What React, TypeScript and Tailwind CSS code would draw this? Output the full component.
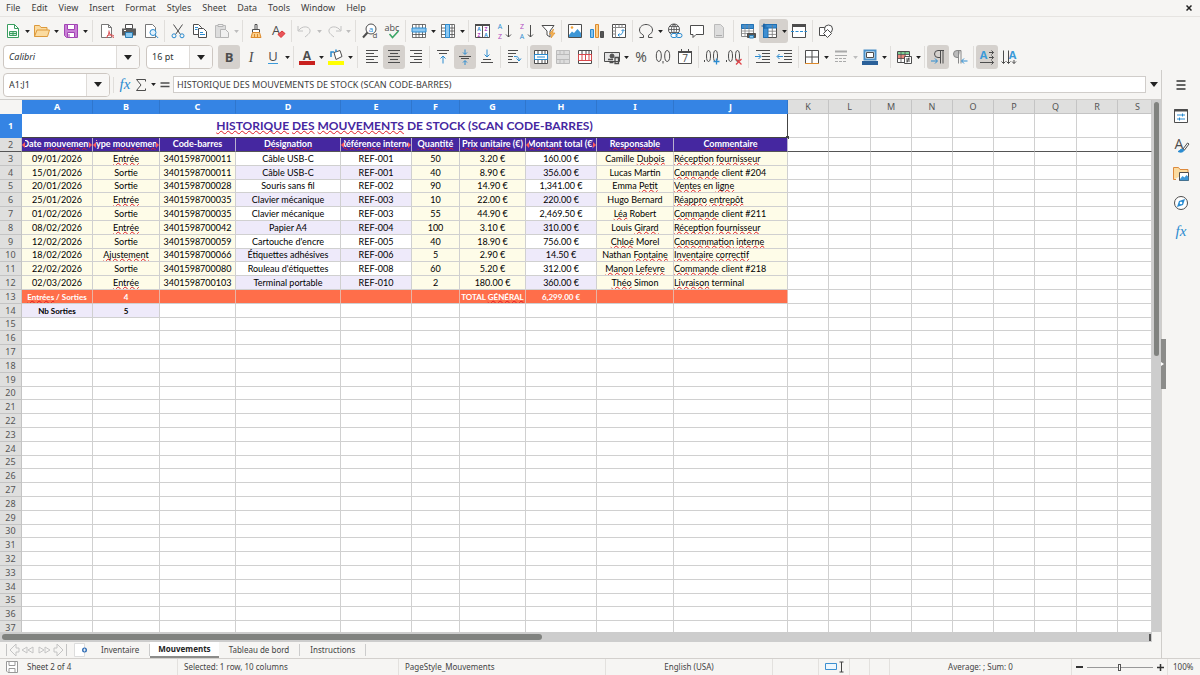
import type { ReactNode } from 'react';
import clsx from 'clsx';

const MENUS = ['File', 'Edit', 'View', 'Insert', 'Format', 'Styles', 'Sheet', 'Data', 'Tools', 'Window', 'Help'];

const COLUMNS = [
  { name: 'A', width: 'w-[71px]' },
  { name: 'B', width: 'w-[67px]' },
  { name: 'C', width: 'w-[76px]' },
  { name: 'D', width: 'w-[105px]' },
  { name: 'E', width: 'w-[71px]' },
  { name: 'F', width: 'w-[48px]' },
  { name: 'G', width: 'w-[66px]' },
  { name: 'H', width: 'w-[71px]' },
  { name: 'I', width: 'w-[77px]' },
  { name: 'J', width: 'w-[114px]' },
  { name: 'K', width: 'w-[41px]' },
  { name: 'L', width: 'w-[42px]' },
  { name: 'M', width: 'w-[41px]' },
  { name: 'N', width: 'w-[41px]' },
  { name: 'O', width: 'w-[41px]' },
  { name: 'P', width: 'w-[41px]' },
  { name: 'Q', width: 'w-[42px]' },
  { name: 'R', width: 'w-[41px]' },
  { name: 'S', width: '' },
];

const TITLE = 'HISTORIQUE DES MOUVEMENTS DE STOCK (SCAN CODE-BARRES)';

const HEADERS = [
  'Date mouvement',
  'Type mouvement',
  'Code-barres',
  'Désignation',
  'Référence interne',
  'Quantité',
  'Prix unitaire (€)',
  'Montant total (€)',
  'Responsable',
  'Commentaire',
];

const MOVEMENTS = [
  ['09/01/2026', 'Entrée', '3401598700011', 'Câble USB-C', 'REF-001', '50', '3.20 €', '160.00 €', 'Camille Dubois', 'Réception fournisseur'],
  ['15/01/2026', 'Sortie', '3401598700011', 'Câble USB-C', 'REF-001', '40', '8.90 €', '356.00 €', 'Lucas Martin', 'Commande client #204'],
  ['20/01/2026', 'Sortie', '3401598700028', 'Souris sans fil', 'REF-002', '90', '14.90 €', '1,341.00 €', 'Emma Petit', 'Ventes en ligne'],
  ['25/01/2026', 'Entrée', '3401598700035', 'Clavier mécanique', 'REF-003', '10', '22.00 €', '220.00 €', 'Hugo Bernard', 'Réappro entrepôt'],
  ['01/02/2026', 'Sortie', '3401598700035', 'Clavier mécanique', 'REF-003', '55', '44.90 €', '2,469.50 €', 'Léa Robert', 'Commande client #211'],
  ['08/02/2026', 'Entrée', '3401598700042', 'Papier A4', 'REF-004', '100', '3.10 €', '310.00 €', 'Louis Girard', 'Réception fournisseur'],
  ['12/02/2026', 'Sortie', '3401598700059', "Cartouche d'encre", 'REF-005', '40', '18.90 €', '756.00 €', 'Chloé Morel', 'Consommation interne'],
  ['18/02/2026', 'Ajustement', '3401598700066', 'Étiquettes adhésives', 'REF-006', '5', '2.90 €', '14.50 €', 'Nathan Fontaine', 'Inventaire correctif'],
  ['22/02/2026', 'Sortie', '3401598700080', "Rouleau d'étiquettes", 'REF-008', '60', '5.20 €', '312.00 €', 'Manon Lefevre', 'Commande client #218'],
  ['02/03/2026', 'Entrée', '3401598700103', 'Terminal portable', 'REF-010', '2', '180.00 €', '360.00 €', 'Théo Simon', 'Livraison terminal'],
];

const TOTALS = ['Entrées / Sorties', '4', '', '', '', '', 'TOTAL GÉNÉRAL', '6,299.00 €', '', ''];

const MISSPELLED = new Set([
  'HISTORIQUE', 'DES', 'MOUVEMENTS', 'mouvement', 'Désignation', 'Référence', 'interne', 'Quantité', 'Prix', 'unitaire',
  'Montant', 'Responsable', 'Commentaire', 'Entrée', 'Entrées', 'Ajustement', 'Dubois', 'Petit', 'Léa', 'Girard', 'Chloé',
  'Fontaine', 'Manon', 'Lefevre', 'Théo', 'Réception', 'fournisseur', 'Commande', 'Ventes', 'ligne', 'Réappro', 'entrepôt',
  'Consommation', 'Inventaire', 'correctif', 'Livraison', 'GÉNÉRAL',
]);

const INPUT_COLUMNS = ['A', 'B', 'C', 'F', 'G', 'I', 'J'];
const CLIPPED_HEADERS = [0, 1, 4, 7];
const LAST_ROW = 37;

const Spelled = ({ text }: { text: string }) => (
  <>
    {text.split(' ').map((word, i) => (
      <span key={i}>
        {i > 0 && ' '}
        {MISSPELLED.has(word) ? (
          <span className="underline decoration-wavy decoration-1 decoration-[#e01b24] underline-offset-0 [text-decoration-skip-ink:none]">
            {word}
          </span>
        ) : (
          word
        )}
      </span>
    ))}
  </>
);

/* ---------- icons, all on a 16px grid ---------- */

const Svg = ({ children }: { children: ReactNode }) => (
  <svg viewBox="0 0 16 16" className="size-4 shrink-0 overflow-visible" fill="none" stroke="#4d4d4d" aria-hidden="true">
    {children}
  </svg>
);

const T = ({ x, y, size, fill = '#4d4d4d', bold, serif, italic, children }: {
  x: number; y: number; size: number; fill?: string; bold?: boolean; serif?: boolean; italic?: boolean; children: ReactNode;
}) => (
  <text
    x={x}
    y={y}
    fontSize={size}
    fill={fill}
    stroke="none"
    textAnchor="middle"
    fontWeight={bold ? 700 : 400}
    fontStyle={italic ? 'italic' : 'normal'}
    fontFamily={serif ? '"Liberation Serif", serif' : '"Open Sans", sans-serif'}
  >
    {children}
  </text>
);

const ICONS: Record<string, ReactNode> = {
  newDoc: (
    <>
      <path d="M2.5 1.5h7l4 4v9h-11z" fill="#fff" stroke="#3a9e5f" />
      <path d="M9.5 1.5v4h4" stroke="#3a9e5f" />
      <path d="M4.5 8.5h7v4h-7zM4.5 10.5h7M8 8.5v4" fill="#cfeeda" stroke="#3a9e5f" />
    </>
  ),
  open: (
    <>
      <path d="M.5 13.500V2.500h5l1.500 2h6v2.500" fill="#fbdba0" stroke="#dd9a3c" />
      <path d="M.5 13.500l2.500-6.500h12.500l-2 6.500z" fill="#fbdba0" stroke="#dd9a3c" />
    </>
  ),
  save: (
    <>
      <path d="M1.500 1.500h13v13h-11l-2-2z" fill="#c97fd6" stroke="#a244b4" />
      <path d="M4.500 1.500h7v5h-7z" fill="#fff" stroke="#a244b4" />
      <path d="M4.500 9.500h7v5h-7z" fill="#fff" stroke="#a244b4" />
      <path d="M6 11v3" stroke="#a244b4" />
    </>
  ),
  pdf: (
    <>
      <path d="M2.500 1.500h7l3 3v10h-10z" fill="#fff" stroke="#777" />
      <path d="M9.500 1.500v3h3" stroke="#777" />
      <path d="M7 15c2-2 3.500-5 3-7.500M8 13c2-1.500 5-1.500 7 0M10 9c1 3 3 5 5 5.500" stroke="#d8484c" />
    </>
  ),
  print: (
    <>
      <path d="M4.500 1.500h7v4h-7z" fill="#fff" />
      <path d="M1 5.500h14v7H1z" fill="#5b5b5b" stroke="none" />
      <path d="M4.500 9.500h7v5h-7z" fill="#8ecbf2" stroke="#2d7db3" />
      <path d="M3 7.500h2" stroke="#fff" />
    </>
  ),
  preview: (
    <>
      <path d="M2.500 1.500h7l3 3v10h-10z" fill="#fff" stroke="#777" />
      <circle cx="10" cy="9.500" r="3" fill="#e4f2fc" stroke="#2a8bd0" />
      <path d="M12.200 12l3 3" stroke="#2a8bd0" />
    </>
  ),
  cut: (
    <>
      <path d="M3.500 1.500l7 10M12.500 1.500l-7 10" />
      <circle cx="4" cy="12.800" r="2" stroke="#2a8bd0" />
      <circle cx="12" cy="12.800" r="2" stroke="#2a8bd0" />
    </>
  ),
  copy: (
    <>
      <path d="M1.500 1.500h5l3 3v7h-8z" fill="#fff" />
      <path d="M6.500 5.500h5l3 3v6h-8z" fill="#fff" />
      <path d="M3 4.500h3M3 6.500h2.500M8 9.500h3M8 11.500h5" stroke="#2a8bd0" />
    </>
  ),
  paste: (
    <>
      <path d="M1.500 2.500h10v12h-10z" fill="#ddd" stroke="#bbb" />
      <path d="M4 1.500h5v2H4zM6.500 6.500h5l3 3v5h-8z" fill="#f0f0f0" stroke="#b5b5b5" />
    </>
  ),
  clone: (
    <>
      <path d="M7 1.500h2v5H7zM4.500 6.500h7v3h-7z" fill="#fff" />
      <path d="M4.500 9.500h7l1.500 5h-10z" fill="#fbcf8a" stroke="#dd8a2c" />
      <path d="M6.500 11v3M9.500 11v3" stroke="#dd8a2c" />
    </>
  ),
  clear: (
    <>
      <T x={6} y={12} size={13}>A</T>
      <path d="M8 11.500l4-3.500 3 2.500-4 4z" fill="#e8555a" stroke="#d33" />
    </>
  ),
  undo: <path d="M1 3v5h5M1.500 7.500C5 2.500 12 3 13 7c.5 3-2 4.500-5 7" stroke="#c2c2c2" />,
  redo: <path d="M15 3v5h-5M14.500 7.500C11 2.500 4 3 3 7c-.5 3 2 4.500 5 7" stroke="#c2c2c2" />,
  find: (
    <>
      <circle cx="9" cy="6" r="5" fill="#fff" />
      <path d="M5.500 9.500L1 14.500" strokeWidth="2" />
      <T x={9} y={9} size={8} fill="#2a8bd0">a</T>
      <T x={13} y={15} size={8}>d</T>
    </>
  ),
  spelling: (
    <>
      <T x={8} y={8} size={9}>abc</T>
      <path d="M5.500 11l3 3.500 6-6.500" stroke="#3aa565" strokeWidth="1.500" />
    </>
  ),
  row: (
    <>
      <path d="M1 1.500h14v13H1z" fill="#fff" stroke="none" />
      <path d="M1.500 1.500h13v13h-13zM1.500 11.500h13M5 1.500v13M8 1.500v13M11.500 1.500v13" strokeWidth=".8" />
      <path d="M1 5h14v4H1z" fill="#8cc8f2" stroke="#2a8bd0" />
    </>
  ),
  column: (
    <>
      <path d="M1 1.500h14v13H1z" fill="#fff" stroke="none" />
      <path d="M1.500 1.500h13v13h-13zM1.500 5h13M1.500 8h13M1.500 11.500h13M12 1.500v13" strokeWidth=".8" />
      <path d="M5.500 1.500h4v13h-4z" fill="#8cc8f2" stroke="#2a8bd0" />
    </>
  ),
  sort: (
    <>
      <path d="M1.500 1.500h14v13h-14z" fill="#fff" />
      <path d="M1 2h15" strokeWidth="2" />
      <path d="M8.500 2v12" />
      <T x={5} y={7.500} size={5} bold fill="#2a8bd0">A</T>
      <T x={5} y={14} size={5} bold fill="#b04ac0">Z</T>
      <T x={12} y={7.500} size={5} bold fill="#b04ac0">Z</T>
      <T x={12} y={14} size={5} bold fill="#2a8bd0">A</T>
    </>
  ),
  asc: (
    <>
      <T x={4} y={6} size={7} fill="#2a8bd0">A</T>
      <T x={4} y={15.500} size={7} fill="#b04ac0">Z</T>
      <path d="M12.500 2v12M10 11.500l2.500 2.500 2.500-2.500" />
    </>
  ),
  desc: (
    <>
      <T x={4} y={6} size={7} fill="#b04ac0">Z</T>
      <T x={4} y={15.500} size={7} fill="#2a8bd0">A</T>
      <path d="M12.500 2v12M10 11.500l2.500 2.500 2.500-2.500" />
    </>
  ),
  filter: (
    <>
      <path d="M2 2.500h12L10 8v6l-3-2V8z" fill="#fff" />
      <path d="M13.500 6l-4 5h2.500l-1 4 4-5h-2.500z" fill="#f9b95c" stroke="#e08f2a" strokeWidth=".7" />
    </>
  ),
  image: (
    <>
      <path d="M1.500 1.500h13v13h-13z" fill="#fff" />
      <path d="M2 12l3-3.500 2 1.500 3.500-4 3.500 4v4H2z" fill="#3e97d6" stroke="none" />
      <circle cx="5" cy="4.500" r="1.300" fill="#f2a33a" stroke="none" />
    </>
  ),
  chart: (
    <>
      <path d="M1.500 6.500h3v8h-3z" fill="#83c3ee" stroke="#2a8bd0" />
      <path d="M6.500 1.500h3v13h-3z" fill="#fbcf8a" stroke="#dd8a2c" />
      <path d="M11.500 8.500h3v6h-3z" fill="#555" />
    </>
  ),
  pivot: (
    <>
      <path d="M1.500 1.500h13v13h-13z" fill="#fff" />
      <path d="M1.500 4.500h13M4.500 1.500v13M8 1.500v3M11 1.500v3M1.500 8h3M1.500 11h3" stroke="#888" />
      <path d="M7 12c4 0 5-2 5-5M10.500 8L12 6.500 13.500 8M8.500 10.500L7 12l1.500 1.500" stroke="#2a8bd0" />
    </>
  ),
  omega: <path d="M1.500 14.500h4v-2.200C2.800 10.800 1.500 9 1.500 7 1.500 3.800 4.500 1.500 8 1.500s6.500 2.300 6.500 5.500c0 2-1.300 3.800-4 5.300v2.200h4" />,
  link: (
    <>
      <circle cx="7" cy="6.500" r="5.500" fill="#fff" />
      <path d="M1.500 6.500h11M7 1v11M2.500 3.500h9M2.500 9.500h9M7 1C3.500 4 3.500 9 7 12M7 1c3.500 3 3.500 8 0 11" strokeWidth=".8" />
      <rect x="4" y="10.500" width="6" height="4" rx="2" fill="#fff" stroke="#2a8bd0" />
      <rect x="9" y="10.500" width="6" height="4" rx="2" stroke="#2a8bd0" />
    </>
  ),
  comment: <path d="M1.500 2.500h13v9H7l-3 3v-3H1.500z" fill="#fff" />,
  headerFooter: (
    <>
      <path d="M3.500 1.500h6l3 3v10h-9z" fill="#ddd" stroke="#bbb" />
      <path d="M5 12.500h6" stroke="#aaa" />
    </>
  ),
  printRange: (
    <>
      <path d="M1.500 1.500h12v12h-12z" fill="#fff" stroke="#888" />
      <path d="M1.500 1.500h12v4h-12z" fill="#3f8fd2" stroke="#2272b4" />
      <path d="M1.500 8h12M1.500 10.500h12M5 1.500v12M9 1.500v12" stroke="#888" strokeWidth=".8" />
      <path d="M7.500 10.500h8v4h-8z" fill="#555" />
      <path d="M9.500 12.500h4v2.500h-4z" fill="#8ecbf2" stroke="#2d7db3" />
    </>
  ),
  freeze: (
    <>
      <path d="M1.500 1.500h13v13h-13z" fill="#fff" />
      <path d="M1.500 1.500h13v3.500h-13zM1.500 5h4.500v9.500H1.500z" fill="#3f8fd2" stroke="#1f6fb3" />
      <path d="M6 8.200h8.500M6 11.400h8.500M10.300 2v12.500" stroke="#777" strokeWidth=".8" />
      <path d="M-.5 3h5M2 .5v5" stroke="#1a5c9a" />
    </>
  ),
  split: (
    <>
      <path d="M1.500 1.500h13v13h-13z" fill="#fff" />
      <path d="M1 2.500h14" strokeWidth="3" />
      <path d="M0 8.500h16" stroke="#2a8bd0" strokeDasharray="3 1.500" />
    </>
  ),
  shapes: (
    <>
      <path d="M1.500 4.500h7v8h-7z" fill="#fff" />
      <circle cx="10.500" cy="6" r="4" fill="#fff" />
      <path d="M9.500 6.500l4 4-4 4-4-4z" fill="#fff" />
    </>
  ),
  bold: <T x={8} y={12.500} size={13} bold>B</T>,
  italic: <T x={8} y={12.500} size={14} serif italic>I</T>,
  underline: (
    <>
      <T x={8} y={11.500} size={13}>U</T>
      <path d="M3 14.500h10" stroke="#3b9ad9" />
    </>
  ),
  fontColor: (
    <>
      <T x={8} y={10.500} size={12} bold>A</T>
      <path d="M0 14h16" stroke="#c9211e" strokeWidth="4" />
    </>
  ),
  highlight: (
    <>
      <path d="M6 3.500l6-2 2 6-6 3z" fill="#fff" />
      <path d="M8 3V.500M3 8V3h3" stroke="#2a8bd0" strokeWidth="1.500" />
      <path d="M0 14h16" stroke="#ffff00" strokeWidth="4" />
    </>
  ),
  left: <path d="M2 1.500h12M2 4.500h8M2 7.500h12M2 10.500h8M2 13.500h12" />,
  center: <path d="M2 1.500h12M4 4.500h8M2 7.500h12M4 10.500h8M2 13.500h12" />,
  right: <path d="M2 1.500h12M6 4.500h8M2 7.500h12M6 10.500h8M2 13.500h12" />,
  top: (
    <>
      <path d="M2 1.500h12M4 4.500h8" />
      <path d="M8 14.500v-7M5.500 9.500L8 7l2.500 2.500" stroke="#2a8bd0" />
    </>
  ),
  middle: (
    <>
      <path d="M2 7.500h12M4 9.500h8" />
      <path d="M8 .5V5M6 3.500L8 5.500l2-2M8 16v-4M6 13.500l2-2 2 2" stroke="#2a8bd0" />
    </>
  ),
  bottom: (
    <>
      <path d="M2 13.500h12M4 10.500h8" />
      <path d="M8 .5v7M5.500 5.500L8 8l2.500-2.500" stroke="#2a8bd0" />
    </>
  ),
  wrap: (
    <>
      <path d="M2 1.500h10M2 4.500h8M2 7.500h5M2 10.500h4M2 13.500h10" />
      <path d="M8 7.500c3 0 5 0 5 4M10.500 9.500L13 12l2-2.500" stroke="#2a8bd0" />
    </>
  ),
  merge: (
    <>
      <path d="M1.500 1.500h13v13h-13zM1.500 5.500h13M1.500 10.500h13M5 1.500v4M9 1.500v4M12 1.500v4M5 10.500v4M9 10.500v4M12 10.500v4" fill="#fff" />
      <path d="M1.500 5.500h13v5h-13zM4 8h8" stroke="#2a8bd0" />
    </>
  ),
  mergeOff: <path d="M1.500 1.500h13v13h-13zM1.500 5.500h13M1.500 10.500h13M5 1.500v4M9 1.500v4M5 10.500v4M9 10.500v4" fill="#ddd" stroke="#bbb" />,
  unmerge: (
    <>
      <path d="M1.500 1.500h13v13h-13zM1.500 5.500h13M5 1.500v4M9 1.500v4M12 1.500v4" fill="#fff" />
      <path d="M1.500 5.500h13v6h-13zM5 5.500v6M8.500 5.500v6M12 5.500v6" stroke="#d8484c" />
    </>
  ),
  currency: (
    <>
      <path d="M.5 3.500h15v9H.500z" fill="#e4e4e4" />
      <circle cx="8" cy="7" r="2" fill="#555" />
      <path d="M4 10.500h5M11 8.500h3.500v6H11zM5.500 13.500h4" strokeWidth="1.300" />
    </>
  ),
  percent: <T x={8} y={13} size={14}>%</T>,
  number: <path d="M3.800 1.500c-1.500 0-2.500 2-2.500 5.500s1 5.500 2.500 5.500 2.500-2 2.500-5.500-1-5.500-2.500-5.500zM12.200 1.500c-1.500 0-2.500 2-2.500 5.500s1 5.500 2.500 5.500 2.500-2 2.500-5.500-1-5.500-2.500-5.500zM8 12v2.500" />,
  date: (
    <>
      <path d="M1.500 2.500h13v12h-13z" fill="#fff" />
      <path d="M1 3h14" strokeWidth="2" />
      <path d="M4.500 0v3M11.500 0v3" />
      <T x={8} y={13} size={10}>7</T>
    </>
  ),
  addDecimal: (
    <>
      <path d="M4.500 1.500c-1.300 0-2 2-2 5.500s.7 5.500 2 5.500 2-2 2-5.500-.7-5.500-2-5.500zM11.500 1.500c-1.300 0-2 2-2 5.500s.7 5.500 2 5.500 2-2 2-5.500-.7-5.500-2-5.500zM.5 11v2" />
      <path d="M12.500 9.500v6M9.500 12.500h6" stroke="#2a8bd0" strokeWidth="1.300" />
    </>
  ),
  delDecimal: (
    <>
      <path d="M4.500 1.500c-1.300 0-2 2-2 5.500s.7 5.500 2 5.500 2-2 2-5.500-.7-5.500-2-5.500zM11.500 1.500c-1.300 0-2 2-2 5.500s.7 5.500 2 5.500 2-2 2-5.500-.7-5.500-2-5.500zM.5 11v2" />
      <path d="M10 10l5.500 5.500M15.500 10L10 15.500" stroke="#e04348" strokeWidth="1.300" />
    </>
  ),
  indent: (
    <>
      <path d="M1 1.500h14M7 4.500h8M7 7.500h8M7 10.500h8M1 13.500h14" />
      <path d="M0 7.500h5.500M3.500 5L6 7.500 3.500 10" stroke="#2a8bd0" />
    </>
  ),
  outdent: (
    <>
      <path d="M1 1.500h14M7 4.500h8M7 7.500h8M7 10.500h8M1 13.500h14" />
      <path d="M6 7.500H.5M2.500 5L0 7.500 2.500 10" stroke="#2a8bd0" />
    </>
  ),
  borders: (
    <>
      <path d="M1.500 1.500h13v13h-13z" fill="#fff" />
      <path d="M8 1.500v13M1.500 8h13" />
      <path d="M1 14.500h14" stroke="#dd8a2c" />
    </>
  ),
  borderStyle: (
    <>
      <path d="M2 2.500h12" stroke="#aaa" strokeWidth="2" />
      <path d="M2 6.500h12" stroke="#aaa" />
      <path d="M2 9.500h12M2 12.500h12" stroke="#aaa" strokeDasharray="3 1" />
    </>
  ),
  borderColor: (
    <>
      <path d="M2.500 1.500h11v9h-11z" fill="#fff" stroke="#4a90c8" strokeWidth="2" />
      <path d="M4.500 3.500h7v5h-7z" />
      <path d="M0 14h16" stroke="#2a6099" strokeWidth="4" />
    </>
  ),
  conditional: (
    <>
      <path d="M1.500 2.500h12v11h-12z" fill="#fff" />
      <path d="M2 3h11v2.500H2z" fill="#7ccf94" stroke="none" />
      <path d="M2 6h8v4H2z" fill="#ec8a80" stroke="none" />
      <path d="M1.500 5.500h12M1.500 9.500h12M5 2.500v11M9 2.500v4" strokeWidth=".8" />
      <path d="M8.500 7.500h7v7h-7zM10 10h4M10 12h4M13 8.500l-2 5" fill="#fff" />
    </>
  ),
  ltr: (
    <>
      <path d="M14 1.500H8a3.500 3.500 0 0 0 0 7h2M10.500 1.500v13M13 1.500v13" />
      <path d="M1 12h6M5 9.500L7.500 12 5 14.500" stroke="#2a8bd0" />
    </>
  ),
  rtl: (
    <>
      <path d="M9 1.500H5a3.500 3.500 0 0 0 0 7h1" fill="#bbb" stroke="#888" />
      <path d="M6.500 1.500v13M9 1.500v13" stroke="#888" />
      <path d="M15.500 12H10M12 9.500L9.500 12l2.500 2.500" stroke="#2a8bd0" />
    </>
  ),
  textLtr: (
    <>
      <T x={4.500} y={9.500} size={11} bold fill="#3b9ad9">A</T>
      <path d="M10 3.500h4.500M12.500 1.500l2 2-2 2M10 8.500h4.500M12.500 6.500l2 2-2 2M1 13.500h13.500M12.500 11.500l2 2-2 2" />
    </>
  ),
  textTtb: (
    <>
      <T x={11.500} y={10} size={11} bold fill="#3b9ad9">A</T>
      <path d="M2.500 1.500v13M.5 12.500l2 2 2-2M7.500 1.500v13M5.500 12.500l2 2 2-2M13 11v3.500M11 12.500l2 2 2-2" />
    </>
  ),
  fx: <T x={8} y={12} size={15} serif italic fill="#2a8bd0">fx</T>,
  sigma: <path d="M12.500 4.500V2.500H3.500L8 8l-4.500 5.500h9v-2" />,
  equals: <path d="M3.500 6h9M3.500 9.500h9" strokeWidth="1.500" />,
  hamburger: <path d="M3.500 4h9M3.500 8h9M3.500 12h9" stroke="#333" strokeWidth="1.500" />,
  properties: (
    <>
      <path d="M1.500 1.500h13v13h-13z" fill="#fff" />
      <path d="M1 2.500h14" strokeWidth="2" />
      <path d="M4 7h8M4 11h8M9.500 5.500v3M6.500 9.500v3" stroke="#2a8bd0" />
    </>
  ),
  styles: (
    <>
      <T x={6} y={12} size={14}>A</T>
      <path d="M14.500 6l-4.500 6 1.500 1L16 7z" fill="#fff" />
      <path d="M5 14.500c2-.5 2-2.500 4.500-2.500l1.500 1.500c-1 2-4 2-6 1z" fill="#2a8bd0" stroke="#2a8bd0" />
    </>
  ),
  gallery: (
    <>
      <path d="M.5 13.500v-12h5l1.500 2h8v3M3 13.500H.500" fill="#fbdba0" stroke="#dd8a3c" />
      <path d="M6.500 6.500h9v8h-9z" fill="#fff" />
      <path d="M7 13l2.500-3 2 1.500 2-2.500 2 2v3.500H7z" fill="#3e97d6" stroke="none" />
    </>
  ),
  navigator: (
    <>
      <circle cx="8" cy="8" r="6.500" fill="#fff" />
      <path d="M12 4l-2 6-6 2 2-6z" fill="#2a8bd0" stroke="none" />
      <circle cx="8" cy="8" r="1.300" fill="#fff" stroke="none" />
    </>
  ),
};

type Tool = { icon: string; label: string; active?: boolean; menu?: boolean; disabled?: boolean; end?: 'sep' | 'wide' };

const STANDARD_TOOLS: Tool[] = [
  { icon: 'newDoc', label: 'New', menu: true },
  { icon: 'open', label: 'Open', menu: true },
  { icon: 'save', label: 'Save', menu: true, end: 'wide' },
  { icon: 'pdf', label: 'Export as PDF' },
  { icon: 'print', label: 'Print' },
  { icon: 'preview', label: 'Print Preview', end: 'sep' },
  { icon: 'cut', label: 'Cut' },
  { icon: 'copy', label: 'Copy' },
  { icon: 'paste', label: 'Paste', menu: true, disabled: true, end: 'sep' },
  { icon: 'clone', label: 'Clone Formatting' },
  { icon: 'clear', label: 'Clear Formatting', end: 'sep' },
  { icon: 'undo', label: 'Undo', menu: true, disabled: true },
  { icon: 'redo', label: 'Redo', menu: true, disabled: true, end: 'wide' },
  { icon: 'find', label: 'Find and Replace' },
  { icon: 'spelling', label: 'Spelling', end: 'sep' },
  { icon: 'row', label: 'Row', menu: true },
  { icon: 'column', label: 'Column', menu: true, end: 'sep' },
  { icon: 'sort', label: 'Sort' },
  { icon: 'asc', label: 'Sort Ascending' },
  { icon: 'desc', label: 'Sort Descending' },
  { icon: 'filter', label: 'AutoFilter', end: 'sep' },
  { icon: 'image', label: 'Insert Image' },
  { icon: 'chart', label: 'Insert Chart' },
  { icon: 'pivot', label: 'Insert Pivot Table', end: 'sep' },
  { icon: 'omega', label: 'Special Character', menu: true },
  { icon: 'link', label: 'Insert Hyperlink' },
  { icon: 'comment', label: 'Insert Comment' },
  { icon: 'headerFooter', label: 'Headers and Footers', disabled: true, end: 'wide' },
  { icon: 'printRange', label: 'Define Print Area' },
  { icon: 'freeze', label: 'Freeze Rows and Columns', menu: true, active: true },
  { icon: 'split', label: 'Split Window', end: 'sep' },
  { icon: 'shapes', label: 'Show Draw Functions' },
];

const FORMAT_TOOLS: Tool[] = [
  { icon: 'bold', label: 'Bold', active: true },
  { icon: 'italic', label: 'Italic' },
  { icon: 'underline', label: 'Underline', menu: true, end: 'sep' },
  { icon: 'fontColor', label: 'Font Color', menu: true },
  { icon: 'highlight', label: 'Background Color', menu: true, end: 'wide' },
  { icon: 'left', label: 'Align Left' },
  { icon: 'center', label: 'Center Horizontally', active: true },
  { icon: 'right', label: 'Align Right', end: 'sep' },
  { icon: 'top', label: 'Align Top' },
  { icon: 'middle', label: 'Center Vertically', active: true },
  { icon: 'bottom', label: 'Align Bottom', end: 'sep' },
  { icon: 'wrap', label: 'Wrap Text', end: 'sep' },
  { icon: 'merge', label: 'Merge and Center', active: true },
  { icon: 'mergeOff', label: 'Merge Cells', disabled: true },
  { icon: 'unmerge', label: 'Unmerge Cells', end: 'sep' },
  { icon: 'currency', label: 'Format as Currency', menu: true },
  { icon: 'percent', label: 'Format as Percent' },
  { icon: 'number', label: 'Format as Number' },
  { icon: 'date', label: 'Format as Date', end: 'sep' },
  { icon: 'addDecimal', label: 'Add Decimal Place' },
  { icon: 'delDecimal', label: 'Delete Decimal Place', end: 'wide' },
  { icon: 'indent', label: 'Increase Indent' },
  { icon: 'outdent', label: 'Decrease Indent', end: 'sep' },
  { icon: 'borders', label: 'Borders', menu: true },
  { icon: 'borderStyle', label: 'Border Style', menu: true, disabled: true },
  { icon: 'borderColor', label: 'Border Color', menu: true, end: 'sep' },
  { icon: 'conditional', label: 'Conditional Formatting', menu: true, end: 'sep' },
  { icon: 'ltr', label: 'Left-To-Right', active: true },
  { icon: 'rtl', label: 'Right-To-Left', end: 'sep' },
  { icon: 'textLtr', label: 'Text direction from left to right', active: true },
  { icon: 'textTtb', label: 'Text direction from top to bottom' },
];

const SIDEBAR_TOOLS: Tool[] = [
  { icon: 'properties', label: 'Properties' },
  { icon: 'styles', label: 'Styles' },
  { icon: 'gallery', label: 'Gallery' },
  { icon: 'navigator', label: 'Navigator' },
  { icon: 'fx', label: 'Functions' },
];

const Caret = ({ big, faded }: { big?: boolean; faded?: boolean }) => (
  <svg viewBox="0 0 8 5" className={big ? 'w-2 h-[5px]' : 'w-[5px] h-[3px]'} fill={faded ? '#bdbdbd' : '#222'} aria-hidden="true">
    <path d="M0 0h8L4 5z" />
  </svg>
);

const ToolButton = ({ tool }: { tool: Tool }) => (
  <>
    <div className={clsx('flex h-6 shrink-0 rounded-[3px]', tool.active && 'bg-[#d5d1cd]')}>
      <button type="button" aria-label={tool.label} disabled={tool.disabled} className="w-[22px] flex items-center justify-center">
        <Svg>{ICONS[tool.icon]}</Svg>
      </button>
      {tool.menu && (
        <button type="button" aria-label={`${tool.label} options`} className="w-[7px] pt-px flex items-center justify-center">
          <Caret faded={tool.disabled} />
        </button>
      )}
    </div>
    {tool.end && <span className={clsx('h-[22px] w-px shrink-0 bg-[#e0dedb]', tool.end === 'wide' ? 'mx-[3px]' : 'mx-[2px]')} />}
  </>
);

const Combo = ({ label, value, className, textClass }: { label: string; value: string; className: string; textClass?: string }) => (
  <div className={clsx('flex h-6 shrink-0 rounded-[4px] border border-[#cdc7c2] bg-white overflow-hidden', className)}>
    <select aria-label={label} className={clsx('flex-1 min-w-0 appearance-none pl-[5px] text-[9px] text-[#2e3436] outline-none', textClass)}>
      <option>{value}</option>
    </select>
    <span className="w-[23px] flex items-center justify-center border-l border-[#dedbd8] bg-[#f8f7f6]">
      <Caret big />
    </span>
  </div>
);

const cell = 'h-full p-0 border-r border-b border-[#d0d0d0] overflow-hidden whitespace-nowrap text-center';

const dataFill = (col: string, row: number) => {
  if (INPUT_COLUMNS.includes(col)) return 'bg-[#fefce8]';
  return row % 2 === 0 ? 'bg-[#eeeafa]' : 'bg-white';
};

const SheetCell = ({ col, row }: { col: number; row: number }) => {
  if (col < 10 && row === 2) {
    const clipped = CLIPPED_HEADERS.includes(col);
    return (
      <td className="relative p-0 bg-[#4527a0] border-r border-b border-r-[#b9b2cf] border-b-[#555] align-top text-white font-bold">
        <div className="flex justify-center overflow-hidden whitespace-nowrap">
          <span><Spelled text={HEADERS[col]} /></span>
        </div>
        {clipped && (
          <>
            <span className="absolute left-0 inset-y-0 flex items-center bg-[#4527a0]">
              <span className="border-y-[3px] border-y-transparent border-r-[3px] border-r-[#ff5c5c]" />
            </span>
            <span className="absolute right-0 inset-y-0 flex items-center bg-[#4527a0]">
              <span className="border-y-[3px] border-y-transparent border-l-[3px] border-l-[#ff5c5c]" />
            </span>
          </>
        )}
      </td>
    );
  }
  if (col < 10 && row >= 3 && row <= 12) {
    const text = MOVEMENTS[row - 3][col];
    return (
      <td className={clsx(cell, dataFill(COLUMNS[col].name, row), col === 9 && 'text-left!')}>
        {[1, 8, 9].includes(col) ? <Spelled text={text} /> : text}
      </td>
    );
  }
  if (col < 10 && row === 13) {
    return (
      <td className="p-0 bg-[#ff6e4a] border-r border-b border-r-[#e8b4a5] border-b-[#d0d0d0] overflow-hidden whitespace-nowrap text-center text-[8px] text-white font-bold">
        <Spelled text={TOTALS[col]} />
      </td>
    );
  }
  if (col < 2 && row === 14) {
    return <td className={clsx(cell, 'bg-[#eeeafa] text-[8px] font-bold')}>{col === 0 ? 'Nb Sorties' : '5'}</td>;
  }
  return <td className={clsx(cell, 'bg-white', row === 2 && 'border-b-[#555]!')} />;
};

const Sheet = () => (
  <div className="flex-1 min-w-0 overflow-hidden bg-white">
    <table className="w-full table-fixed border-separate border-spacing-0 font-['Lato',sans-serif] text-[9px] leading-[12px] text-black">
      <colgroup>
        <col className="w-[22px]" />
        {COLUMNS.map((c) => (
          <col key={c.name} className={c.width} />
        ))}
      </colgroup>
      <thead className="font-['Noto_Sans',sans-serif]">
        <tr className="h-[14px]">
          <th className="p-0 bg-[#f6f5f3]" />
          {COLUMNS.map((c, i) => (
            <th
              key={c.name}
              scope="col"
              className={clsx(
                'p-0 border-r border-b text-[9px]',
                c.name === 'S' && 'pl-[6px]!',
                i < 10 ? 'bg-[#3584e4] border-r-[#2f76cd] border-b-[#3584e4] text-white font-bold' : 'bg-[#dfdfde] border-[#c4c4c4] text-[#555] font-normal',
              )}
            >
              {c.name}
            </th>
          ))}
        </tr>
      </thead>
      <tbody>
        {Array.from({ length: LAST_ROW }, (_, i) => i + 1).map((row) => (
          <tr key={row} className={row === 1 ? 'h-6' : row % 5 === 0 ? 'h-[13px]' : 'h-[14px]'}>
            <th
              scope="row"
              className={clsx(
                "p-0 border-r border-b font-['Noto_Sans',sans-serif]",
                row === 1 ? 'bg-[#3584e4] border-[#3584e4] text-white font-bold' : 'bg-[#dfdfde] border-[#c4c4c4] text-[#555] font-normal',
                row === 2 && 'border-b-[#555]!',
              )}
            >
              {row}
            </th>
            {row === 1 && (
              <td colSpan={10} className="relative p-0 bg-white border-r border-b border-[#444] text-center text-[12px] leading-[20px] font-bold text-[#4527a0]">
                <Spelled text={TITLE} />
                <span className="absolute -right-[2px] -bottom-[2px] size-[3px] bg-[#444]" />
              </td>
            )}
            {COLUMNS.map((c, col) => (row === 1 && col < 10 ? null : <SheetCell key={c.name} col={col} row={row} />))}
          </tr>
        ))}
      </tbody>
    </table>
  </div>
);

const SheetTabs = () => (
  <nav className="h-4 flex items-center text-[8px] text-[#444]" aria-label="Sheets">
    <button type="button" aria-label="Scroll sheets" className="ml-[6px] w-[61px] shrink-0">
      <svg viewBox="0 0 61 12" className="w-full h-3" fill="none" stroke="#c4c4c4" aria-hidden="true">
        <path d="M.5 0v12M10 0L4 6l6 6V8h3V4h-3zM21 3l-5 3 5 3zM27 3l-5 3 5 3zM33 3l5 3-5 3zM39 3l5 3-5 3zM51 0l6 6-6 6V8h-3V4h3zM60.500 0v12" />
      </svg>
    </button>
    <button type="button" aria-label="Add sheet" className="ml-[7px] w-4 shrink-0">
      <svg viewBox="0 0 16 14" className="w-4 h-[14px]" fill="#fff" stroke="#ccc" aria-hidden="true">
        <path d="M.5.5h10v13H.500z" stroke="#ddd" />
        <circle cx="10.500" cy="7" r="2.500" fill="#2f6db5" stroke="none" />
        <path d="M9 7h3M10.500 5.500v3" stroke="#fff" strokeWidth=".8" />
      </svg>
    </button>
    <a href="#inventaire" className="ml-[1px] px-[10px] border-r border-[#ccc]">Inventaire</a>
    <a href="#mouvements" aria-current="page" className="h-4 px-2 flex items-center bg-white border-b-2 border-[#8c8c8a] font-bold text-[#222]">
      Mouvements
    </a>
    <a href="#tableau-de-bord" className="px-[10px] border-r border-[#ccc]">Tableau de bord</a>
    <a href="#instructions" className="px-[10px] border-r border-[#ccc]">Instructions</a>
  </nav>
);

const StatusBar = () => (
  <footer className="h-[17px] shrink-0 flex items-stretch border-t border-[#d3d0cd] bg-[#f6f5f3] text-[8px] text-[#444] whitespace-nowrap *:flex *:items-center">
    <div className="w-[23px] pl-[6px]">
      <svg viewBox="0 0 12 12" className="size-3" fill="#fff" stroke="#999" aria-hidden="true">
        <path d="M.5.500h11v11H2L.500 10zM3 .500h6v4H3zM3 7.500h6v4H3z" />
      </svg>
    </div>
    <div className="flex-150 pl-1 border-r border-[#e3e1de]">Sheet 2 of 4</div>
    <div className="flex-214 pl-[6px] border-r border-[#e3e1de]">Selected: 1 row, 10 columns</div>
    <div className="flex-200 pl-[6px] border-r border-[#e3e1de]">PageStyle_Mouvements</div>
    <div className="flex-166 justify-center border-r border-[#e3e1de]">English (USA)</div>
    <div className="w-[46px] border-r border-[#e3e1de]" />
    <div className="w-[31px] pl-[6px] border-r border-[#e3e1de]">
      <svg viewBox="0 0 22 12" className="w-[22px] h-3" fill="none" stroke="#444" aria-hidden="true">
        <path d="M.5 2.500h11v6H.500z" fill="#eef7fd" stroke="#3b8fd0" />
        <path d="M14.500 1h4M16.500 1v10M14.500 11h4" />
      </svg>
    </div>
    <div className="w-5 border-r border-[#e3e1de]" />
    <div className="w-5 border-r border-[#e3e1de]" />
    <div className="flex-181 justify-center border-r border-[#e3e1de]">Average: ; Sum: 0</div>
    <div className="w-[96px] justify-center gap-1 border-r border-[#e3e1de]">
      <button type="button" aria-label="Zoom out" className="w-[7px] h-[7px] flex items-center">
        <span className="w-full h-[2px] bg-[#333]" />
      </button>
      <input
        type="range"
        aria-label="Zoom"
        defaultValue={50}
        className="w-[66px] h-[9px] appearance-none bg-[linear-gradient(#999,#999)] bg-[length:100%_1px] bg-center bg-no-repeat [&::-webkit-slider-thumb]:appearance-none [&::-webkit-slider-thumb]:w-[3px] [&::-webkit-slider-thumb]:h-[7px] [&::-webkit-slider-thumb]:border [&::-webkit-slider-thumb]:border-[#555] [&::-webkit-slider-thumb]:bg-white"
      />
      <button type="button" aria-label="Zoom in" className="w-[7px] h-[7px]">
        <svg viewBox="0 0 7 7" className="size-[7px]" stroke="#333" strokeWidth="1.500" aria-hidden="true">
          <path d="M0 3.500h7M3.500 0v7" />
        </svg>
      </button>
    </div>
    <div className="w-8 pl-[5px]">100%</div>
  </footer>
);

const App = () => {
  return (
    <div className="h-screen flex flex-col overflow-hidden bg-[#f6f5f3] font-['Noto_Sans',sans-serif] text-[#3d3d3d]">
      <header className="h-[17px] shrink-0 flex items-center justify-between border-b border-[#e6e4e1]">
        <nav className="flex gap-[11px] pl-[6px] text-[9px] leading-4" aria-label="Menu bar">
          {MENUS.map((menu) => (
            <button key={menu} type="button">
              {menu}
            </button>
          ))}
        </nav>
        <button type="button" aria-label="Close document" className="mr-2">
          <svg viewBox="0 0 6 6" className="size-[6px]" stroke="#222" strokeWidth="1.500" aria-hidden="true">
            <path d="M.5.500l5 5M5.500.500l-5 5" />
          </svg>
        </button>
      </header>

      <div className="h-[27px] shrink-0 flex items-center pl-[2px]">
        {STANDARD_TOOLS.map((tool) => (
          <ToolButton key={tool.icon} tool={tool} />
        ))}
      </div>

      <div className="h-[26px] shrink-0 flex items-center pl-[3px]">
        <Combo label="Font name" value="Calibri" className="w-[137px] mr-[6px]" textClass="italic" />
        <Combo label="Font size" value="16 pt" className="w-[67px] mr-[5px]" />
        {FORMAT_TOOLS.map((tool) => (
          <ToolButton key={tool.icon} tool={tool} />
        ))}
      </div>

      <div className="flex-1 min-h-0 flex">
        <main className="flex-1 min-w-0 flex flex-col">
          <div className="h-[30px] shrink-0 flex items-center pl-[3px] border-b border-[#cfcdca]">
            <div className="w-[107px] h-6 flex rounded-[4px] border border-[#cdc7c2] bg-white overflow-hidden">
              <input aria-label="Name box" defaultValue="A1:J1" className="flex-1 min-w-0 pl-[5px] text-[9px] text-[#2e3436] outline-none" />
              <button type="button" aria-label="Cell ranges" className="w-[23px] flex items-center justify-center border-l border-[#dedbd8] bg-[#f8f7f6]">
                <Caret big />
              </button>
            </div>
            <span className="mx-[3px] w-px h-4 bg-[#e0dedb]" />
            <button type="button" aria-label="Function wizard" className="w-4"><Svg>{ICONS.fx}</Svg></button>
            <button type="button" aria-label="Select function" className="w-4"><Svg>{ICONS.sigma}</Svg></button>
            <button type="button" aria-label="Function list" className="w-2 flex justify-center"><Caret /></button>
            <button type="button" aria-label="Formula" className="w-4"><Svg>{ICONS.equals}</Svg></button>
            <input
              aria-label="Input line"
              defaultValue={TITLE}
              className="flex-1 min-w-0 h-[17px] pl-[3px] border border-[#d0cdca] bg-white text-[9px] outline-none"
            />
            <button type="button" aria-label="Expand formula bar" className="w-[15px] flex justify-center"><Caret big /></button>
          </div>

          <div className="flex-1 min-h-0 flex">
            <Sheet />
            <div className="w-[9px] shrink-0 bg-[#cdcdcd] pt-[2px] pl-[2px]">
              <div className="w-[5px] h-[48%] rounded-full bg-[#80827f]" />
            </div>
          </div>

          <div className="h-[10px] shrink-0 flex items-center bg-[#cdcdcd] mr-[9px] pl-[2px] pr-px">
            <div className="w-[47%] h-[6px] rounded-full bg-[#80827f]" />
            <div className="ml-auto w-[2px] h-[7px] bg-[#555]" />
          </div>
          <SheetTabs />
        </main>

        <aside className="relative w-[39px] shrink-0 flex flex-col items-center border-l border-[#cfcdca]" aria-label="Sidebar">
          <button type="button" aria-label="Sidebar settings" className="h-[29px] mb-[2px]"><Svg>{ICONS.hamburger}</Svg></button>
          {SIDEBAR_TOOLS.map((tool) => (
            <button key={tool.icon} type="button" aria-label={tool.label} className="h-[29px]">
              <Svg>{ICONS[tool.icon]}</Svg>
            </button>
          ))}
          <button type="button" aria-label="Hide sidebar" className="absolute -left-px top-1/2 -translate-y-1/2 w-[5px] h-[50px] flex items-center bg-[#8c8c8a]">
            <span className="border-y-2 border-y-transparent border-l-[3px] border-l-white" />
          </button>
        </aside>
      </div>

      <StatusBar />
    </div>
  );
};

export default App;
